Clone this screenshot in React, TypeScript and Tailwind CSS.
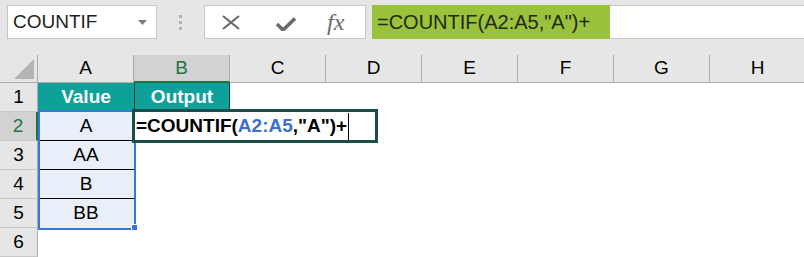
import React from "react";

const COLS = ["A", "B", "C", "D", "E", "F", "G", "H"];

type Cell = { text?: string; kind?: "head" | "data" | "last" };

const ROWS: { n: number; a: Cell; b: Cell }[] = [
  { n: 1, a: { text: "Value", kind: "head" }, b: { text: "Output", kind: "head" } },
  { n: 2, a: { text: "A", kind: "data" }, b: {} },
  { n: 3, a: { text: "AA", kind: "data" }, b: {} },
  { n: 4, a: { text: "B", kind: "data" }, b: {} },
  { n: 5, a: { text: "BB", kind: "last" }, b: {} },
  { n: 6, a: {}, b: {} },
];

function ACell({ cell }: { cell: Cell }) {
  if (cell.kind === "head")
    return (
      <div className="flex h-full w-[96px] items-center justify-center bg-[#0ea19a] text-[19px] font-bold text-white">
        {cell.text}
      </div>
    );
  if (cell.kind === "data" || cell.kind === "last")
    return (
      <div
        className={
          cell.kind === "data"
            ? "flex h-full w-[96px] items-center justify-center border-b border-black bg-[#e9eff8] pt-[1px] text-[19px] text-black"
            : "flex h-full w-[96px] items-center justify-center bg-[#e9eff8] text-[19px] text-black"
        }
      >
        {cell.text}
      </div>
    );
  return <div className="h-full w-[96px]" />;
}

function BCell({ cell }: { cell: Cell }) {
  if (cell.kind === "head")
    return (
      <div className="flex h-full w-[96px] items-center justify-center border-x border-[#1a3d3b] bg-[#0ea19a] text-[19px] font-bold text-white">
        {cell.text}
      </div>
    );
  return <div className="h-full w-[96px]" />;
}

export default function App() {
  return (
    <div className="relative h-[257px] w-[804px] overflow-hidden bg-white font-['Liberation_Sans',Arial,sans-serif]">
      {/* Formula bar */}
      <div className="flex h-[55px] items-start bg-[#e6e6e6] pt-[5px]">
        <div className="ml-[7px] flex h-[34px] w-[150px] items-center justify-between border border-[#c6c6c6] bg-white pl-[5px] pr-[9px] text-[19px] text-[#1e1e1e]">
          <span>COUNTIF</span>
          <svg width="9" height="5" viewBox="0 0 9 5">
            <path d="M0 0h9L4.5 5z" fill="#7a7a7a" />
          </svg>
        </div>
        <div className="flex h-[34px] w-[47px] flex-col items-center justify-center gap-[3px]">
          <span className="h-[3px] w-[3px] bg-[#b4b4b4]" />
          <span className="h-[3px] w-[3px] bg-[#b4b4b4]" />
          <span className="h-[3px] w-[3px] bg-[#b4b4b4]" />
        </div>
        <div className="flex h-[34px] w-[162px] items-center border border-[#c6c6c6] bg-white pl-[17px]">
          <svg width="18" height="15" viewBox="0 0 18 15">
            <path d="M1 1l16 13M17 1L1 14" stroke="#6b6b6b" strokeWidth="2.2" />
          </svg>
          <svg className="ml-[36px] mt-[4px]" width="20" height="14" viewBox="0 0 20 14">
            <path d="M1 7l6 6L19 1.5" stroke="#6b6b6b" strokeWidth="3.6" fill="none" />
          </svg>
          <span className="ml-[31px] font-['Liberation_Serif',serif] text-[24px] italic leading-none text-[#6b6b6b]">fx</span>
        </div>
        <div className="ml-[6px] flex h-[34px] w-[238px] items-center bg-[#9bc23c] pl-[5px] text-[20px] text-[#1f2a10]">
          =COUNTIF(A2:A5,"A")+
        </div>
        <div className="h-[34px] flex-1 border-y border-[#c6c6c6] bg-white" />
      </div>

      {/* Column headers */}
      <div className="flex h-[28px] bg-[#e6e6e6]">
        <div className="relative h-full w-[38px] shrink-0 border-b border-r border-[#ababab]">
          <svg className="absolute bottom-[3px] right-[3px]" width="20" height="20" viewBox="0 0 20 20">
            <path d="M20 0V20H0z" fill="#b4b4b4" />
          </svg>
        </div>
        {COLS.map((c) =>
          c === "B" ? (
            <div
              key={c}
              className="flex h-full w-[96px] shrink-0 items-center justify-center border-b-2 border-r border-b-[#217346] border-r-[#ababab] bg-[#d2d2d2] text-[19px] text-[#217346]"
            >
              {c}
            </div>
          ) : (
            <div
              key={c}
              className="flex h-full w-[96px] shrink-0 items-center justify-center border-b border-r border-[#ababab] text-[19px] text-black"
            >
              {c}
            </div>
          ),
        )}
      </div>

      {/* Rows */}
      {ROWS.map((r) => (
        <div key={r.n} className="flex h-[29px]">
          {r.n === 2 ? (
            <div className="flex h-full w-[38px] shrink-0 items-center justify-center border-b border-r-2 border-b-[#c8c8c8] border-r-[#217346] bg-[#d2d2d2] text-[19px] text-[#217346]">
              {r.n}
            </div>
          ) : (
            <div className="flex h-full w-[38px] shrink-0 items-center justify-center border-b border-r border-b-[#c8c8c8] border-r-[#ababab] bg-[#e6e6e6] text-[19px] text-black">
              {r.n}
            </div>
          )}
          <ACell cell={r.a} />
          <BCell cell={r.b} />
        </div>
      ))}

      {/* Selection A2:A5 */}
      <div className="absolute left-[38px] top-[110px] h-[120px] w-[98px] border-2 border-[#3a76d6]" />
      <div className="absolute left-[131px] top-[224px] h-[7px] w-[7px] border border-white bg-[#3a76d6]" />

      {/* Edit cell B2 */}
      <div className="absolute left-[132px] top-[109px] flex h-[34px] w-[246px] items-center border-[3px] border-[#1b4d4b] bg-white pl-[1px] text-[19px] font-bold text-black">
        <span>=COUNTIF(</span>
        <span className="text-[#3a6fd0]">A2:A5</span>
        <span>,"A")+</span>
        <span className="ml-[1px] h-[27px] w-px bg-black" />
      </div>
    </div>
  );
}
